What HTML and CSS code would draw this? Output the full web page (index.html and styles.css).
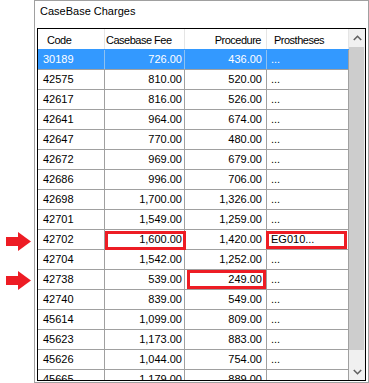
FILE: index.html
```html
<!DOCTYPE html>
<html>
<head>
<meta charset="utf-8">
<link rel="stylesheet" href="styles.css">
</head>
<body>
<div class="page">
  <svg class="arrow arrow-a" width="25" height="19" viewBox="0 0 25 19"><rect x="0" y="5" width="13" height="9" fill="#ed1c24"/><polygon points="12,0 25,9.5 12,19" fill="#ed1c24"/></svg>
  <svg class="arrow arrow-b" width="25" height="19" viewBox="0 0 25 19"><rect x="0" y="5" width="13" height="9" fill="#ed1c24"/><polygon points="12,0 25,9.5 12,19" fill="#ed1c24"/></svg>
  <div class="panel">
    <div class="title">CaseBase Charges</div>
    <div class="grid">
      <div class="table">
        <div class="hdr">
          <div class="c code"><span class="hcode">Code</span></div>
          <div class="c fee"><span class="hfee">Casebase Fee</span></div>
          <div class="c proc num"><span class="hproc">Procedure</span></div>
          <div class="c pros"><span class="hpros">Prostheses</span></div>
        </div>
        <div class="row sel"><div class="c code">30189</div><div class="c fee num">726.00</div><div class="c proc num">436.00</div><div class="c pros">...</div></div>
        <div class="row"><div class="c code">42575</div><div class="c fee num">810.00</div><div class="c proc num">520.00</div><div class="c pros">...</div></div>
        <div class="row"><div class="c code">42617</div><div class="c fee num">816.00</div><div class="c proc num">526.00</div><div class="c pros">...</div></div>
        <div class="row"><div class="c code">42641</div><div class="c fee num">964.00</div><div class="c proc num">674.00</div><div class="c pros">...</div></div>
        <div class="row"><div class="c code">42647</div><div class="c fee num">770.00</div><div class="c proc num">480.00</div><div class="c pros">...</div></div>
        <div class="row"><div class="c code">42672</div><div class="c fee num">969.00</div><div class="c proc num">679.00</div><div class="c pros">...</div></div>
        <div class="row"><div class="c code">42686</div><div class="c fee num">996.00</div><div class="c proc num">706.00</div><div class="c pros">...</div></div>
        <div class="row"><div class="c code">42698</div><div class="c fee num">1,700.00</div><div class="c proc num">1,326.00</div><div class="c pros">...</div></div>
        <div class="row"><div class="c code">42701</div><div class="c fee num">1,549.00</div><div class="c proc num">1,259.00</div><div class="c pros">...</div></div>
        <div class="row"><div class="c code">42702</div><div class="c fee num hl hl-fee">1,600.00</div><div class="c proc num">1,420.00</div><div class="c pros hl hl-pros">EG010...</div></div>
        <div class="row"><div class="c code">42704</div><div class="c fee num">1,542.00</div><div class="c proc num">1,252.00</div><div class="c pros">...</div></div>
        <div class="row"><div class="c code">42738</div><div class="c fee num">539.00</div><div class="c proc num hl hl-proc">249.00</div><div class="c pros">...</div></div>
        <div class="row"><div class="c code">42740</div><div class="c fee num">839.00</div><div class="c proc num">549.00</div><div class="c pros">...</div></div>
        <div class="row"><div class="c code">45614</div><div class="c fee num">1,099.00</div><div class="c proc num">809.00</div><div class="c pros">...</div></div>
        <div class="row"><div class="c code">45623</div><div class="c fee num">1,173.00</div><div class="c proc num">883.00</div><div class="c pros">...</div></div>
        <div class="row"><div class="c code">45626</div><div class="c fee num">1,044.00</div><div class="c proc num">754.00</div><div class="c pros">...</div></div>
        <div class="row"><div class="c code">45665</div><div class="c fee num">1,179.00</div><div class="c proc num">889.00</div><div class="c pros">...</div></div>
      </div>
      <div class="vscroll">
        <div class="sbtn"><svg width="9" height="6" viewBox="0 0 9 6"><polyline points="0.8,5 4.5,1.3 8.2,5" fill="none" stroke="#606060" stroke-width="1.6"/></svg></div>
        <div class="track"><div class="thumb"></div></div>
        <div class="sbtn"><svg width="9" height="6" viewBox="0 0 9 6"><polyline points="0.8,1 4.5,4.7 8.2,1" fill="none" stroke="#606060" stroke-width="1.6"/></svg></div>
      </div>
    </div>
  </div>
</div>
</body>
</html>
```
FILE: styles.css
```css
html, body {
  margin: 0;
  padding: 0;
  background: #ffffff;
}
body {
  font-family: "Liberation Sans", Arial, sans-serif;
  font-size: 11px;
  color: #000;
}
.page {
  position: relative;
  width: 369px;
  height: 383px;
  overflow: hidden;
}
.arrow {
  position: absolute;
  left: 6px;
  display: block;
}
.arrow-a { top: 232px; }
.arrow-b { top: 271px; }
.panel {
  box-sizing: border-box;
  margin-left: 34px;
  width: 335px;
  height: 383px;
  border: 1px solid #a0a0a0;
  background: #fff;
  display: flex;
  flex-direction: column;
}
.title {
  box-sizing: border-box;
  height: 27px;
  padding: 4px 0 0 5px;
  line-height: 13px;
  flex: none;
}
.grid {
  box-sizing: border-box;
  margin-left: 2px;
  width: 329px;
  height: 353px;
  border: 1px solid #000;
  display: flex;
  flex: none;
}
.table {
  width: 311px;
  height: 351px;
  overflow: hidden;
  flex: none;
}
.hdr, .row {
  display: flex;
  box-sizing: border-box;
  height: 20px;
}
.row {
  border-top: 1px solid #a0a0a0;
}
.c {
  box-sizing: border-box;
  border-right: 1px solid #a0a0a0;
  line-height: 19px;
  white-space: nowrap;
  overflow: visible;
  position: relative;
}
.hdr .c {
  border-right-color: #e5e5e5;
  line-height: 20px;
  padding-top: 1px;
  letter-spacing: -0.5px;
}
.code { width: 67px; padding-left: 5px; }
.fee { width: 80px; }
.proc { width: 82px; }
.pros { width: 82px; padding-left: 4px; }
.num { text-align: right; }
.row .fee { padding-right: 2px; }
.row .proc { padding-right: 4px; }
.hcode { padding-left: 4px; }
.hfee { padding-left: 1px; }
.hdr .proc { padding-right: 5px; }
.hpros { padding-left: 3px; }
.sel {
  background: #3399ff;
  color: #fff;
  border-top-color: #3399ff;
}
.sel .c { border-right-color: #8fc1f0; }
.sel .pros { border-right-color: #a0a0a0; }
.hl::after {
  content: "";
  position: absolute;
  box-sizing: border-box;
  border: 3px solid #ed1c24;
}
.hl-fee::after { left: 0; top: 1px; width: 81px; height: 19px; }
.hl-pros::after { left: -1px; top: 1px; width: 81px; height: 18px; }
.hl-proc::after { left: 2px; top: 0; width: 79px; height: 19px; }
.vscroll {
  width: 16px;
  height: 351px;
  background: #f0f0f0;
  display: flex;
  flex-direction: column;
  flex: none;
}
.sbtn {
  height: 17px;
  display: flex;
  align-items: center;
  justify-content: center;
  flex: none;
}
.sbtn svg { display: block; }
.track {
  flex: 1;
  display: flex;
  flex-direction: column;
}
.thumb {
  margin: 1px 1px 0 0;
  height: 303px;
  background: #cdcdcd;
}
```
